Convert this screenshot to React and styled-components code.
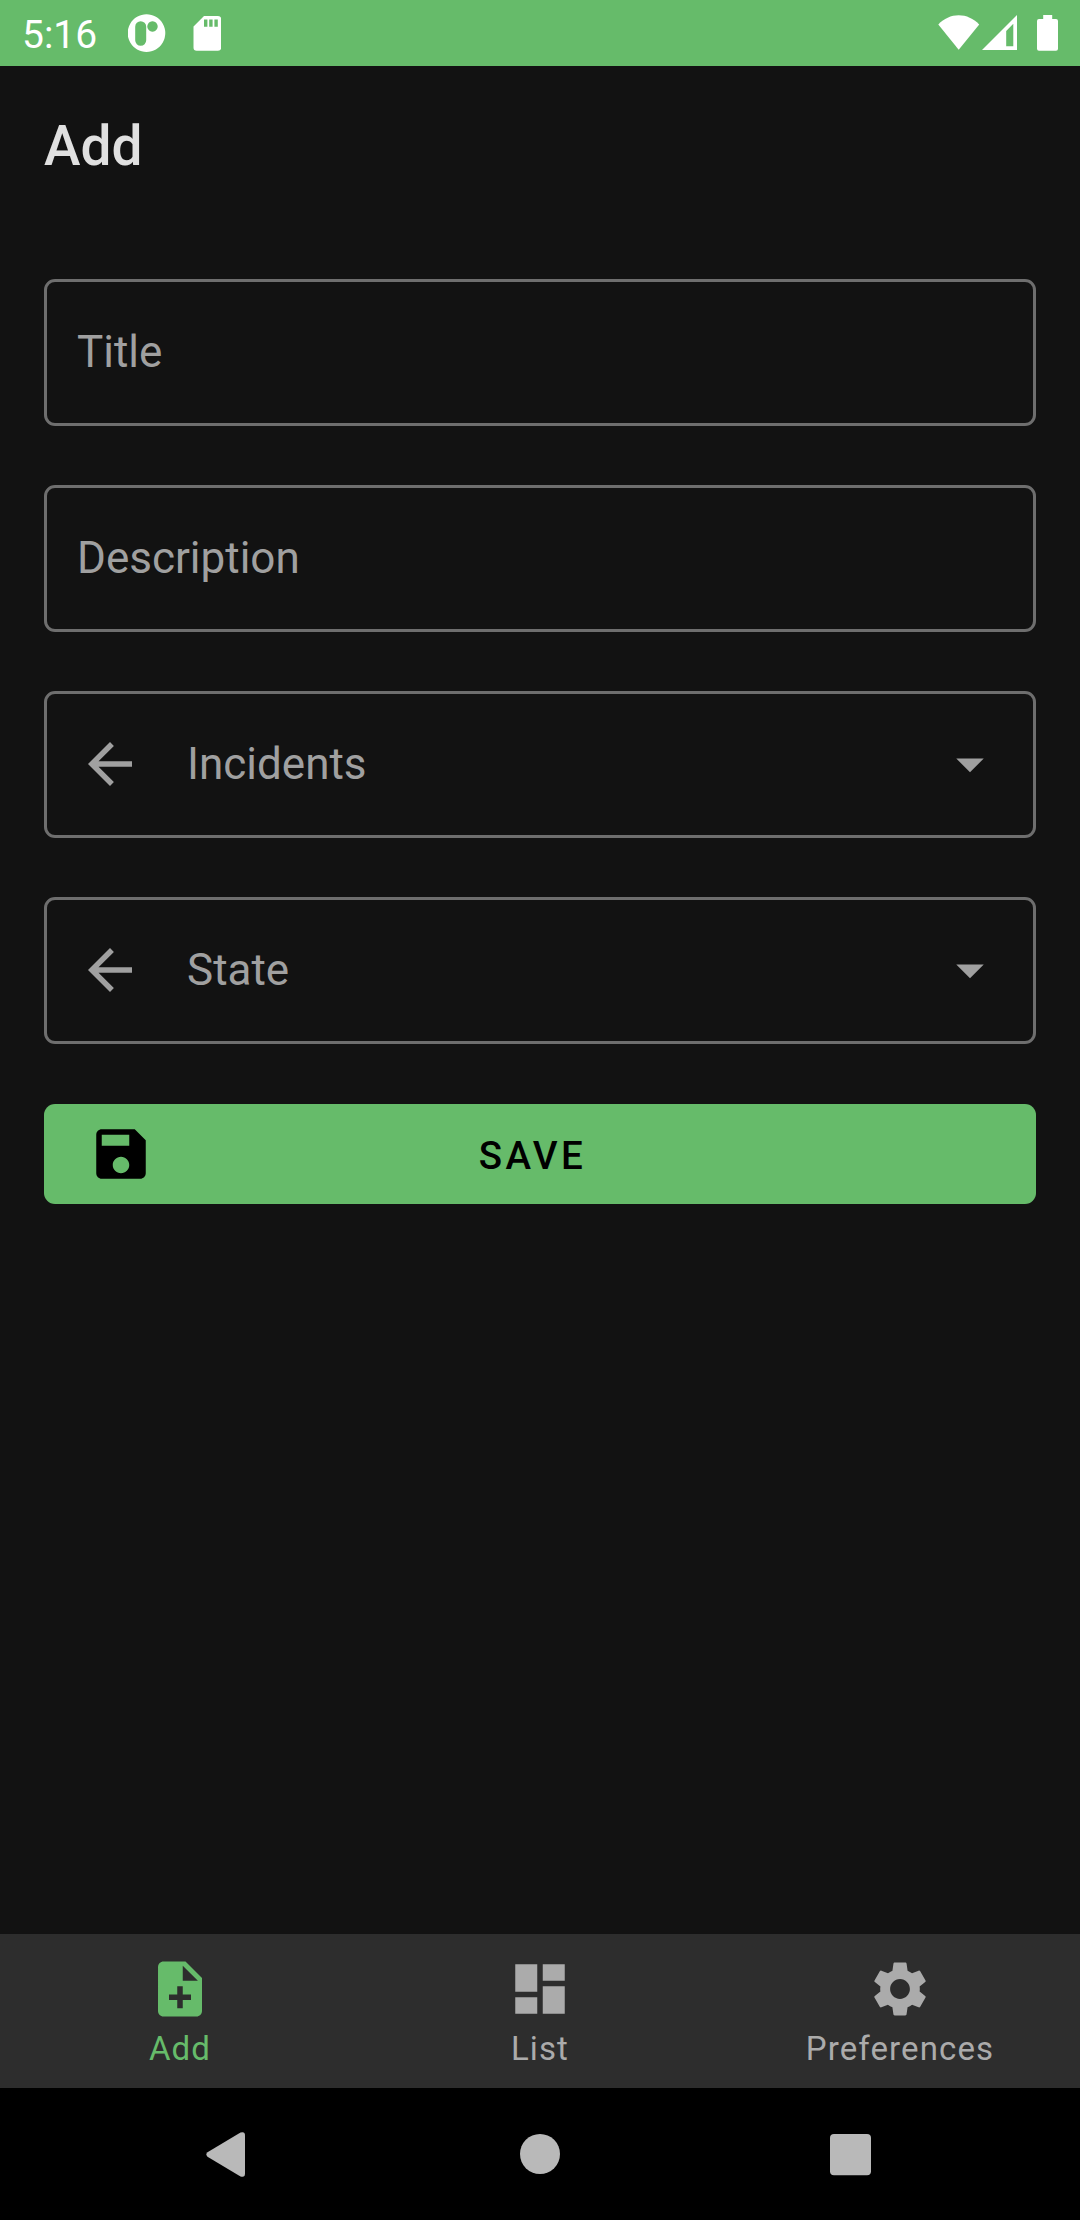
import React from "react";
import styled, { createGlobalStyle } from "styled-components";

const GlobalStyle = createGlobalStyle`
  *, *::before, *::after { box-sizing: border-box; }
  body { margin: 0; background: #121212; }
  svg { display: block; flex: none; }
`;

const Screen = styled.div`
  display: flex;
  flex-direction: column;
  width: 1080px;
  height: 2220px;
  background: #121212;
  font-family: Roboto, "Liberation Sans", sans-serif;
  overflow: hidden;
`;

const StatusBar = styled.header`
  display: flex;
  align-items: center;
  justify-content: space-between;
  height: 66px;
  padding: 0 22px;
  background: #66bb6a;
  color: #fff;
`;

const StatusGroup = styled.div`
  display: flex;
  align-items: center;
`;

const Clock = styled.span`
  width: 106px;
  font-size: 39px;
  line-height: 46px;
  padding-top: 4px;
`;

const StatusIcon = styled.svg`
  width: ${(p) => p.$w}px;
  height: 66px;
  margin-left: ${(p) => p.$gap || 0}px;
  fill: currentColor;
`;

const Toolbar = styled.div`
  display: flex;
  align-items: center;
  height: 154px;
  padding: 6px 44px 0;
`;

const Heading = styled.h1`
  margin: 0;
  font-size: 55px;
  line-height: 64px;
  font-weight: 500;
  color: #e0e0e0;
`;

const Form = styled.main`
  display: flex;
  flex: 1;
  flex-direction: column;
  gap: 59px;
  padding: 59px 44px 0;
`;

const Field = styled.div`
  display: flex;
  align-items: center;
  height: 147px;
  padding: 0 30px 1px;
  border: 3px solid #6e6e6e;
  border-radius: 11px;
  color: #a0a0a0;
`;

const FieldLabel = styled.span`
  flex: 1;
  margin-left: ${(p) => (p.$indent ? 44 : 0)}px;
  font-size: 44px;
  line-height: 52px;
`;

const Icon = styled.svg`
  width: 66px;
  height: 66px;
  fill: currentColor;
`;

const SaveButton = styled.button`
  display: flex;
  align-items: center;
  height: 100px;
  margin-top: 1px;
  padding: 0 44px;
  border: 0;
  border-radius: 11px;
  background: #66bb6a;
  color: #000;
  font-family: inherit;
`;

const SaveText = styled.span`
  flex: 1;
  padding: 3px 81px 0 0;
  font-size: 38.5px;
  line-height: 46px;
  font-weight: 500;
  letter-spacing: 3.44px;
  text-align: center;
`;

const Tabs = styled.nav`
  display: grid;
  grid-template-columns: repeat(3, 1fr);
  height: 154px;
  background: #2d2d2d;
`;

const Tab = styled.div`
  display: flex;
  flex-direction: column;
  align-items: center;
  gap: 7px;
  padding-top: 22px;
  color: ${(p) => (p.$active ? "#66bb6a" : "#ababab")};
`;

const TabLabel = styled.span`
  font-size: 33px;
  line-height: 39px;
  letter-spacing: 1.1px;
`;

const SystemBar = styled.footer`
  display: flex;
  align-items: center;
  height: 132px;
  padding-left: 206px;
  background: #000;
  color: #b9b9b9;
`;

const SystemIcon = styled.svg`
  width: ${(p) => p.$w}px;
  height: 132px;
  margin-left: ${(p) => p.$gap || 0}px;
  fill: currentColor;
`;

const paths = {
  arrow: "M20 11H7.83l5.59-5.59L12 4l-8 8 8 8 1.41-1.41L7.83 13H20v-2z",
  caret: "M7 10l5 5 5-5z",
  save: "M17 3H5c-1.11 0-2 .9-2 2v14c0 1.1.89 2 2 2h14c1.1 0 2-.9 2-2V7l-4-4zm-5 16c-1.66 0-3-1.34-3-3s1.34-3 3-3 3 1.34 3 3-1.34 3-3 3zm3-10H5V5h10v4z",
  add: "M14 2H6c-1.1 0-1.99.9-1.99 2L4 20c0 1.1.89 2 1.99 2H18c1.1 0 2-.9 2-2V8l-6-6zm2 14h-3v3h-2v-3H8v-2h3v-3h2v3h3v2zm-3-7V3.5L18.5 9H13z",
  list: "M3 13h8V3H3v10zm0 8h8v-6H3v6zm10 0h8V11h-8v10zm0-18v6h8V3h-8z",
  preferences:
    "M19.14 12.94c.04-.3.06-.61.06-.94 0-.32-.02-.64-.07-.94l2.03-1.58c.18-.14.23-.41.12-.61l-1.92-3.32c-.12-.22-.37-.29-.59-.22l-2.39.96c-.5-.38-1.03-.7-1.62-.94l-.36-2.54c-.04-.24-.24-.41-.48-.41h-3.84c-.24 0-.43.17-.47.41l-.36 2.54c-.59.24-1.13.57-1.62.94l-2.39-.96c-.22-.08-.47 0-.59.22L2.74 8.87c-.12.21-.08.47.12.61l2.03 1.58c-.05.3-.09.63-.09.94s.02.64.07.94l-2.03 1.58c-.18.14-.23.41-.12.61l1.92 3.32c.12.22.37.29.59.22l2.39-.96c.5.38 1.03.7 1.62.94l.36 2.54c.05.24.24.41.48.41h3.84c.24 0 .44-.17.47-.41l.36-2.54c.59-.24 1.13-.56 1.62-.94l2.39.96c.22.08.47 0 .59-.22l1.92-3.32c.12-.22.07-.47-.12-.61l-2.01-1.58zM12 15.6c-1.98 0-3.6-1.62-3.6-3.6s1.62-3.6 3.6-3.6 3.6 1.62 3.6 3.6-1.62 3.6-3.6 3.6z",
};

function Glyph({ name }) {
  return (
    <Icon viewBox="0 0 24 24" aria-hidden="true">
      <path d={paths[name]} />
    </Icon>
  );
}

function Dropdown({ label }) {
  return (
    <Field>
      <Glyph name="arrow" />
      <FieldLabel $indent>{label}</FieldLabel>
      <Glyph name="caret" />
    </Field>
  );
}

const tabs = [
  { icon: "add", label: "Add", active: true },
  { icon: "list", label: "List" },
  { icon: "preferences", label: "Preferences" },
];

export default function App() {
  return (
    <Screen>
      <GlobalStyle />
      <StatusBar>
        <StatusGroup>
          <Clock>5:16</Clock>
          <StatusIcon $w={38} viewBox="0 0 38 66">
            <path
              fillRule="evenodd"
              d="M18.5 14.3a18.8 18.8 0 1 0 .01 0zM12.7 21.2a5.5 5.5 0 0 1 5.5 5.5v13.6a5.5 5.5 0 0 1-11 0V26.7a5.5 5.5 0 0 1 5.5-5.5zM24.5 21.3a5.2 5.2 0 1 1-.01 0z"
            />
          </StatusIcon>
          <StatusIcon $w={28} $gap={27} viewBox="0 0 28 66">
            <path
              fillRule="evenodd"
              d="M11 16h14a3.2 3.2 0 0 1 3.2 3.2v28.300a3.200 3.200 0 0 1-3.200 3.200H3.700a3.200 3.200 0 0 1-3.200-3.200V26.500zM11 19.500v7.300h3.400v-7.300zM16.200 19.500v7.300h3.400v-7.300zM21.400 19.500v7.300h3.400v-7.300z"
            />
          </StatusIcon>
        </StatusGroup>
        <StatusGroup>
          <StatusIcon $w={42} viewBox="0 0 42 66">
            <path d="M.3 24.400C6 18.500 13 15.200 20.700 15.200S35.400 18.500 41.200 24.400L20.700 49.800z" />
          </StatusIcon>
          <StatusIcon $w={35} $gap={2} viewBox="0 0 35 66">
            <path fillRule="evenodd" d="M35 15v35H0zM31.300 23.800L24.200 31v15.200h7.100z" />
          </StatusIcon>
          <StatusIcon $w={21} $gap={20} viewBox="0 0 21 66">
            <path d="M6.200 15h9v4h3.800a2 2 0 0 1 2 2v27.700a2 2 0 0 1-2 2H2a2 2 0 0 1-2-2V21a2 2 0 0 1 2-2h4.200z" />
          </StatusIcon>
        </StatusGroup>
      </StatusBar>

      <Toolbar>
        <Heading>Add</Heading>
      </Toolbar>

      <Form>
        <Field>
          <FieldLabel>Title</FieldLabel>
        </Field>
        <Field>
          <FieldLabel>Description</FieldLabel>
        </Field>
        <Dropdown label="Incidents" />
        <Dropdown label="State" />
        <SaveButton type="button">
          <Glyph name="save" />
          <SaveText>SAVE</SaveText>
        </SaveButton>
      </Form>

      <Tabs>
        {tabs.map((tab) => (
          <Tab key={tab.label} $active={tab.active}>
            <Glyph name={tab.icon} />
            <TabLabel>{tab.label}</TabLabel>
          </Tab>
        ))}
      </Tabs>

      <SystemBar>
        <SystemIcon $w={39} viewBox="0 0 39 132">
          <path d="M1.500 64.300L34.500 44.600Q39 43 39 47.500V85.500Q39 90 34.500 88.400L1.500 68.700Q-.8 66.500 1.500 64.300z" />
        </SystemIcon>
        <SystemIcon $w={40} $gap={275} viewBox="0 0 40 132">
          <circle cx="20" cy="66" r="20" />
        </SystemIcon>
        <SystemIcon $w={41} $gap={270} viewBox="0 0 41 132">
          <rect y="46" width="41" height="41.300" rx="4" />
        </SystemIcon>
      </SystemBar>
    </Screen>
  );
}
